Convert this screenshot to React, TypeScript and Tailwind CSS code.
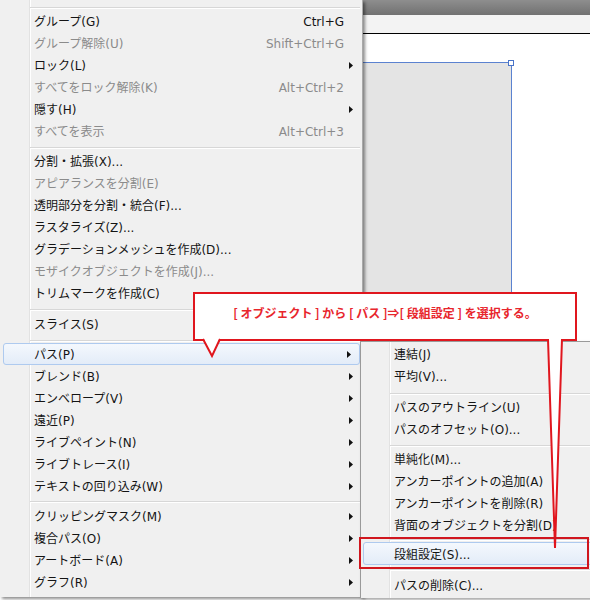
import React from "react";

type Row =
  | { t: "item"; label: string; sc?: string; dis?: boolean; sub?: boolean; hl?: boolean }
  | { t: "sep"; cls: string };

const mainRows: Row[] = [
  { t: "sep", cls: "h-[10px] pt-[7px]" },
  { t: "item", label: "グループ(G)", sc: "Ctrl+G" },
  { t: "item", label: "グループ解除(U)", sc: "Shift+Ctrl+G", dis: true },
  { t: "item", label: "ロック(L)", sub: true },
  { t: "item", label: "すべてをロック解除(K)", sc: "Alt+Ctrl+2", dis: true },
  { t: "item", label: "隠す(H)", sub: true },
  { t: "item", label: "すべてを表示", sc: "Alt+Ctrl+3", dis: true },
  { t: "sep", cls: "h-[8px] pt-[5px]" },
  { t: "item", label: "分割・拡張(X)..." },
  { t: "item", label: "アピアランスを分割(E)", dis: true },
  { t: "item", label: "透明部分を分割・統合(F)..." },
  { t: "item", label: "ラスタライズ(Z)..." },
  { t: "item", label: "グラデーションメッシュを作成(D)..." },
  { t: "item", label: "モザイクオブジェクトを作成(J)...", dis: true },
  { t: "item", label: "トリムマークを作成(C)" },
  { t: "sep", cls: "h-[9px] pt-[5px]" },
  { t: "item", label: "スライス(S)", sub: true },
  { t: "sep", cls: "h-[8px] pt-[5px]" },
  { t: "item", label: "パス(P)", sub: true, hl: true },
  { t: "item", label: "ブレンド(B)", sub: true },
  { t: "item", label: "エンベロープ(V)", sub: true },
  { t: "item", label: "遠近(P)", sub: true },
  { t: "item", label: "ライブペイント(N)", sub: true },
  { t: "item", label: "ライブトレース(I)", sub: true },
  { t: "item", label: "テキストの回り込み(W)", sub: true },
  { t: "sep", cls: "h-[8px] pt-[4px]" },
  { t: "item", label: "クリッピングマスク(M)", sub: true },
  { t: "item", label: "複合パス(O)", sub: true },
  { t: "item", label: "アートボード(A)", sub: true },
  { t: "item", label: "グラフ(R)", sub: true },
];

const subRows: Row[] = [
  { t: "item", label: "連結(J)" },
  { t: "item", label: "平均(V)..." },
  { t: "sep", cls: "h-[9px] pt-[6px]" },
  { t: "item", label: "パスのアウトライン(U)" },
  { t: "item", label: "パスのオフセット(O)..." },
  { t: "sep", cls: "h-[8px] pt-[5px]" },
  { t: "item", label: "単純化(M)..." },
  { t: "item", label: "アンカーポイントの追加(A)" },
  { t: "item", label: "アンカーポイントを削除(R)" },
  { t: "item", label: "背面のオブジェクトを分割(D)" },
  { t: "sep", cls: "h-[6px] pt-[3px]" },
  { t: "item", label: "段組設定(S)...", hl: true },
  { t: "sep", cls: "h-[10px] pt-[5px]" },
  { t: "item", label: "パスの削除(C)..." },
];

function Arrow() {
  return (
    <svg width="4" height="7" viewBox="0 0 4 7" className="block">
      <polygon points="0,0 4,3.5 0,7" fill="#111" />
    </svg>
  );
}

function Sep({ cls, ml }: { cls: string; ml: string }) {
  return (
    <div className={cls}>
      <div className={`${ml} mr-[2px] h-[2px] border-t border-[#d7d7d7] border-b border-b-white`} />
    </div>
  );
}

function MainItem({ r }: { r: Extract<Row, { t: "item" }> }) {
  const color = r.dis ? "text-[#8b8b8b]" : "text-[#141414]";
  if (r.hl) {
    return (
      <div className="h-[22px] pl-[3px] pr-[2px]">
        <div className="h-[22px] flex items-center rounded-[3px] border border-[#aecaef] bg-linear-to-b from-[#f4f8fd] to-[#e3ecf8] pl-[30px]">
          <span className={`relative top-[1px] flex-1 leading-[20px] ${color}`}>{r.label}</span>
          <span className="w-[16px] flex items-center pl-[4px]">{r.sub && <Arrow />}</span>
        </div>
      </div>
    );
  }
  return (
    <div className="h-[22px] flex items-center pl-[34px]">
      <span className={`relative top-[1px] flex-1 leading-[22px] whitespace-nowrap ${color}`}>{r.label}</span>
      {r.sc && <span className={`relative top-[1px] leading-[22px] ${color}`}>{r.sc}</span>}
      <span className="w-[18px] flex items-center pl-[5px]">{r.sub && <Arrow />}</span>
    </div>
  );
}

function SubItem({ r }: { r: Extract<Row, { t: "item" }> }) {
  if (r.hl) {
    return (
      <div className="h-[22px] pl-[2px] pr-[2px]">
        <div className="h-[23px] flex items-center rounded-[3px] border border-[#aecaef] bg-linear-to-b from-[#f4f8fd] to-[#e3ecf8] pl-[30px]">
          <span className="relative top-[1px] leading-[20px] text-[#141414] whitespace-nowrap">{r.label}</span>
        </div>
      </div>
    );
  }
  return (
    <div className="h-[22px] flex items-center pl-[33px]">
      <span className="relative top-[1px] leading-[22px] text-[#141414] whitespace-nowrap">{r.label}</span>
    </div>
  );
}

export default function App() {
  return (
    <div className="relative w-[590px] h-[600px] overflow-hidden bg-white flex font-['DejaVu_Sans','Noto_Sans_CJK_JP',sans-serif] text-[12px]">
      {/* main menu */}
      <div className="relative z-10 w-[363px] h-[597px] shrink-0 flex flex-col border-r border-[#a9a9a9] shadow-[2px_2px_3px_rgba(0,0,0,0.45)] bg-[linear-gradient(to_right,#f0f0f0_29px,#e2e2e2_29px,#e2e2e2_30px,#ffffff_30px,#ffffff_31px,#f0f0f0_31px)]">
        {mainRows.map((r, i) =>
          r.t === "sep" ? <Sep key={i} cls={r.cls} ml="ml-[30px]" /> : <MainItem key={i} r={r} />
        )}
      </div>

      {/* canvas area */}
      <div className="flex-1 flex flex-col">
        <div className="h-[15px] bg-linear-to-b from-[#8e8e8e] to-[#717171]" />
        <div className="h-[19px] bg-[#f3f3f3] border-b border-black" />
        <div className="flex-1 bg-white pt-[28px]">
          <div className="relative w-[149px] h-[320px] bg-[#e4e4e4] border-t border-r border-[#5b82d0]">
            <div className="absolute -top-[3px] -right-[3px] w-[6px] h-[6px] bg-white border border-[#4a74c8]" />
          </div>
        </div>
      </div>

      {/* submenu */}
      <div className="absolute left-[360px] top-[341px] z-20 w-[240px] h-[257px] flex flex-col border-l border-t border-[#9a9a9a] shadow-[2px_2px_3px_rgba(0,0,0,0.35)] bg-[linear-gradient(to_right,#f0f0f0_28px,#e2e2e2_28px,#e2e2e2_29px,#ffffff_29px,#ffffff_30px,#f0f0f0_30px)]">
        <div className="h-[1px]" />
        {subRows.map((r, i) =>
          r.t === "sep" ? <Sep key={i} cls={r.cls} ml="ml-[29px]" /> : <SubItem key={i} r={r} />
        )}
      </div>

      {/* callout */}
      <div className="absolute left-[193px] top-[292px] z-30 w-[384px] h-[49px] bg-white border-2 border-[#e0161e] pt-[10px] text-center leading-[18px] font-bold text-[#e8262d] whitespace-nowrap font-['Noto_Sans_CJK_JP',sans-serif]">
        [ オブジェクト ] から [ パス ]⇒[ 段組設定 ] を選択する。
      </div>
      <svg className="absolute left-0 top-0 z-30 pointer-events-none" width="590" height="600" viewBox="0 0 590 600">
        <polygon points="203,337 212,356 220,337" fill="#ffffff" />
        <polyline points="203,339 212,356 220,339" fill="none" stroke="#e0161e" strokeWidth="2" strokeLinejoin="miter" />
        <polygon points="548,337 555,548 562,337" fill="#ffffff" />
        <polyline points="548,339 555,548 562,339" fill="none" stroke="#e0161e" strokeWidth="2" />
      </svg>

      {/* highlight box */}
      <div className="absolute left-[359px] top-[537px] z-40 w-[230px] h-[32px] border-2 border-[#d0161e]" />
    </div>
  );
}
